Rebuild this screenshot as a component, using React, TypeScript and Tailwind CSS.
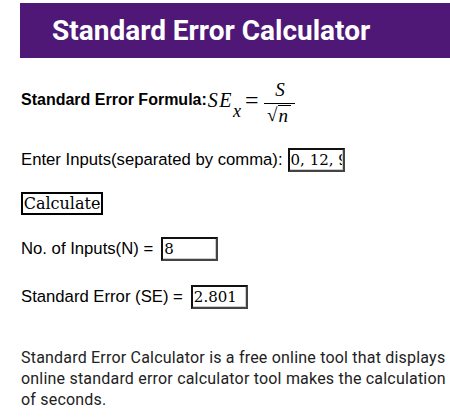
export default function App() {
  return (
    <div className="w-[450px] h-[418px] overflow-hidden bg-white text-black">
      {/* header bar */}
      <div className="ml-5 mt-[3px] h-[55px] bg-[#4f1877] flex items-center pl-8">
        <h1 className="text-[28px] font-bold text-white font-['Roboto',sans-serif] whitespace-nowrap">Standard Error Calculator</h1>
      </div>

      <div className="pl-[21px]">
        {/* formula */}
        <div className="mt-[20px] flex items-center h-[44px]">
          <span className="font-['Liberation_Sans',Arial,sans-serif] font-bold text-[16px] mb-[1px]">Standard Error Formula:</span>
          <span className="ml-[1px] font-['Liberation_Serif',serif] italic text-[20px] tracking-[1.5px] leading-none">SE</span>
          <span className="font-['Liberation_Serif',serif] italic text-[18px] leading-none mt-[22px]">x</span>
          <span className="font-['Liberation_Serif',serif] text-[24px] leading-none ml-[4px] mr-[5px]">=</span>
          <span className="mt-[5px] flex flex-col items-center font-['Liberation_Serif',serif] italic text-[19px] leading-none">
            <span className="pb-[4px] pl-[2px]">S</span>
            <span className="w-[31px] border-t border-black"></span>
            <span className="flex items-start pt-[1px]">
              <span className="not-italic text-[19px]">√</span>
              <span className="border-t border-black pl-[1px] pr-[3px]">n</span>
            </span>
          </span>
        </div>

        <div className="mt-[26px] flex items-center h-[24px] font-['Liberation_Sans',Arial,sans-serif] text-[16.7px]">
          <span>Enter Inputs(separated by comma):</span>
          <input readOnly value="0, 12, 9, 4, 6, 2, 3, 8" className="ml-[5px] w-[57px] h-[24px] border-2 border-[#111] border-r-[#444] border-b-[#444] shadow-[inset_-1px_-1px_0_#ccc] bg-white px-[1px] font-['DejaVu_Serif',serif] text-[15px] outline-none" />
        </div>

        <button className="mt-[20px] block h-[23px] w-[82px] border-2 border-black bg-white font-['DejaVu_Serif',serif] text-[16px] leading-none">Calculate</button>

        <div className="mt-[22px] flex items-center h-[24px] font-['Liberation_Sans',Arial,sans-serif] text-[16.7px]">
          <span>No. of Inputs(N) =</span>
          <input readOnly value="8" className="ml-[8px] w-[57px] h-[24px] border-2 border-[#111] border-r-[#444] border-b-[#444] shadow-[inset_-1px_-1px_0_#ccc] bg-white px-[1px] font-['DejaVu_Serif',serif] text-[15px] outline-none" />
        </div>

        <div className="mt-[24px] flex items-center h-[24px] font-['Liberation_Sans',Arial,sans-serif] text-[16.7px]">
          <span>Standard Error (SE) =</span>
          <input readOnly value="2.801" className="ml-[8px] w-[57px] h-[24px] border-2 border-[#111] border-r-[#444] border-b-[#444] shadow-[inset_-1px_-1px_0_#ccc] bg-white px-[1px] font-['DejaVu_Serif',serif] text-[15px] outline-none" />
        </div>

        <p className="mt-[38px] font-['Roboto',sans-serif] text-[16px] tracking-[0.2px] leading-[21px] text-[#222] whitespace-nowrap">
          Standard Error Calculator is a free online tool that displays
          <br />
          online standard error calculator tool makes the calculation
          <br />
          of seconds.
        </p>
      </div>
    </div>
  );
}
